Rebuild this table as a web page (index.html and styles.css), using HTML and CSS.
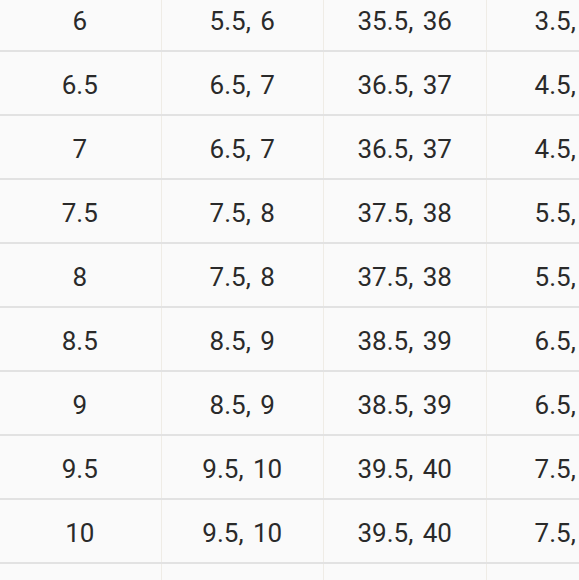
FILE: index.html
```html
<!DOCTYPE html>
<html lang="en">
<head>
<meta charset="utf-8">
<title>Size chart</title>
<link rel="stylesheet" href="styles.css">
</head>
<body>
<div class="chart">
  <div class="row"><div class="cell">6</div><div class="cell">5.5, 6</div><div class="cell">35.5, 36</div><div class="cell">3.5, 4</div></div>
  <div class="row"><div class="cell">6.5</div><div class="cell">6.5, 7</div><div class="cell">36.5, 37</div><div class="cell">4.5, 5</div></div>
  <div class="row"><div class="cell">7</div><div class="cell">6.5, 7</div><div class="cell">36.5, 37</div><div class="cell">4.5, 5</div></div>
  <div class="row"><div class="cell">7.5</div><div class="cell">7.5, 8</div><div class="cell">37.5, 38</div><div class="cell">5.5, 6</div></div>
  <div class="row"><div class="cell">8</div><div class="cell">7.5, 8</div><div class="cell">37.5, 38</div><div class="cell">5.5, 6</div></div>
  <div class="row"><div class="cell">8.5</div><div class="cell">8.5, 9</div><div class="cell">38.5, 39</div><div class="cell">6.5, 7</div></div>
  <div class="row"><div class="cell">9</div><div class="cell">8.5, 9</div><div class="cell">38.5, 39</div><div class="cell">6.5, 7</div></div>
  <div class="row"><div class="cell">9.5</div><div class="cell">9.5, 10</div><div class="cell">39.5, 40</div><div class="cell">7.5, 8</div></div>
  <div class="row"><div class="cell">10</div><div class="cell">9.5, 10</div><div class="cell">39.5, 40</div><div class="cell">7.5, 8</div></div>
  <div class="row"><div class="cell">10.5</div><div class="cell">10.5, 11</div><div class="cell">40.5, 41</div><div class="cell">8.5, 9</div></div>
</div>
</body>
</html>
```

FILE: styles.css
```css
html, body {
  margin: 0;
  padding: 0;
  background: #fafafa;
  overflow: hidden;
}
body {
  width: 579px;
  height: 580px;
  font-family: Roboto, "Liberation Sans", sans-serif;
  color: #2a2a2a;
}
.chart {
  margin-top: -12px;
  margin-left: -1px;
  width: 650px;
}
.row {
  display: grid;
  grid-template-columns: repeat(4, 162.5px);
  height: 64px;
  box-sizing: border-box;
  border-bottom: 2px solid #e2e2e2;
}
.cell {
  display: flex;
  align-items: center;
  justify-content: center;
  box-sizing: border-box;
  border-right: 1px solid #efece6;
  font-size: 26px;
  font-weight: 400;
  letter-spacing: 0;
  word-spacing: 3px;
  padding-top: 3px;
}
```
